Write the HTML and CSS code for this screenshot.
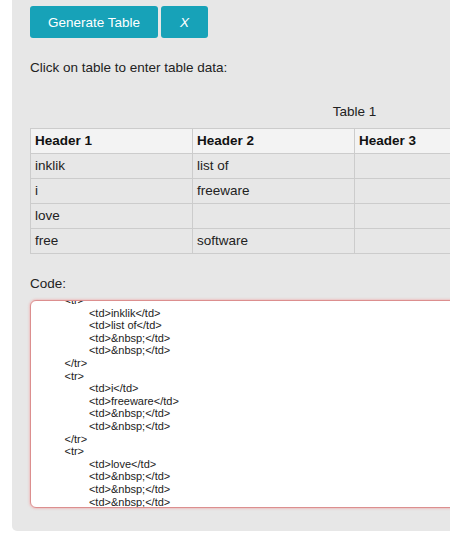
FILE: index.html
```html
<!DOCTYPE html>
<html>
<head>
<meta charset="utf-8">
<link rel="stylesheet" href="styles.css">
</head>
<body>
<div class="panel">
  <div class="buttons">
    <button class="btn btn-gen">Generate Table</button>
    <button class="btn btn-x">X</button>
  </div>
  <p class="hint">Click on table to enter table data:</p>
  <table class="data">
    <caption>Table 1</caption>
    <colgroup><col><col><col><col></colgroup>
    <thead>
      <tr><th>Header 1</th><th>Header 2</th><th>Header 3</th><th>Header 4</th></tr>
    </thead>
    <tbody>
      <tr><td>inklik</td><td>list of</td><td></td><td></td></tr>
      <tr><td>i</td><td>freeware</td><td></td><td></td></tr>
      <tr><td>love</td><td></td><td></td><td></td></tr>
      <tr><td>free</td><td>software</td><td></td><td></td></tr>
    </tbody>
  </table>
  <p class="code-label">Code:</p>
  <div class="code-box">
<pre class="code">	&lt;tr&gt;
		&lt;td&gt;inklik&lt;/td&gt;
		&lt;td&gt;list of&lt;/td&gt;
		&lt;td&gt;&amp;nbsp;&lt;/td&gt;
		&lt;td&gt;&amp;nbsp;&lt;/td&gt;
	&lt;/tr&gt;
	&lt;tr&gt;
		&lt;td&gt;i&lt;/td&gt;
		&lt;td&gt;freeware&lt;/td&gt;
		&lt;td&gt;&amp;nbsp;&lt;/td&gt;
		&lt;td&gt;&amp;nbsp;&lt;/td&gt;
	&lt;/tr&gt;
	&lt;tr&gt;
		&lt;td&gt;love&lt;/td&gt;
		&lt;td&gt;&amp;nbsp;&lt;/td&gt;
		&lt;td&gt;&amp;nbsp;&lt;/td&gt;
		&lt;td&gt;&amp;nbsp;&lt;/td&gt;
	&lt;/tr&gt;</pre>
  </div>
</div>
</body>
</html>
```
FILE: styles.css
```css
html, body {
  margin: 0;
  padding: 0;
  background: #ffffff;
  overflow: hidden;
}
body {
  width: 450px;
  height: 542px;
  font-family: "Liberation Sans", Arial, sans-serif;
  color: #222222;
}
.panel {
  margin-left: 12px;
  width: 720px;
  height: 531px;
  box-sizing: border-box;
  background: #e7e7e7;
  border-radius: 0 0 5px 5px;
  padding: 6px 0 0 18px;
}
.buttons {
  display: flex;
  gap: 3px;
}
.btn {
  height: 32px;
  border: none;
  border-radius: 3px;
  background: #17a2b8;
  color: #ffffff;
  font-family: "Liberation Sans", Arial, sans-serif;
  font-size: 13.5px;
  padding: 0;
  cursor: pointer;
}
.btn-gen {
  width: 128px;
}
.btn-x {
  width: 47px;
  font-style: italic;
}
.hint {
  margin: 22px 0 0 0;
  font-size: 13.5px;
  line-height: 16px;
}
.data {
  margin-top: 28px;
  border-collapse: collapse;
  table-layout: fixed;
  width: 648px;
  font-size: 13.5px;
}
.data col {
  width: 162px;
}
.data caption {
  line-height: 16px;
  padding-bottom: 8px;
  text-align: center;
}
.data th,
.data td {
  border: 1px solid #cccccc;
  height: 25px;
  box-sizing: border-box;
  padding: 0 4px;
  line-height: 16px;
  text-align: left;
  color: #222222;
}
.data th {
  background: #f3f3f3;
  font-weight: bold;
  color: #111111;
}
.code-label {
  margin: 22px 0 0 0;
  font-size: 13.5px;
  line-height: 16px;
}
.code-box {
  margin-top: 8px;
  width: 520px;
  height: 208px;
  box-sizing: border-box;
  background: #ffffff;
  border: 1px solid #dc8f8f;
  border-radius: 6px;
  box-shadow: 0 0 2px 1px rgba(240, 170, 170, 0.6);
  overflow: hidden;
  padding: 0 0 0 9px;
}
.code {
  margin: -7px 0 0 0;
  font-family: "Liberation Sans", Arial, sans-serif;
  font-size: 11px;
  line-height: 12.6px;
  color: #222222;
  tab-size: 8;
  white-space: pre;
}
```
